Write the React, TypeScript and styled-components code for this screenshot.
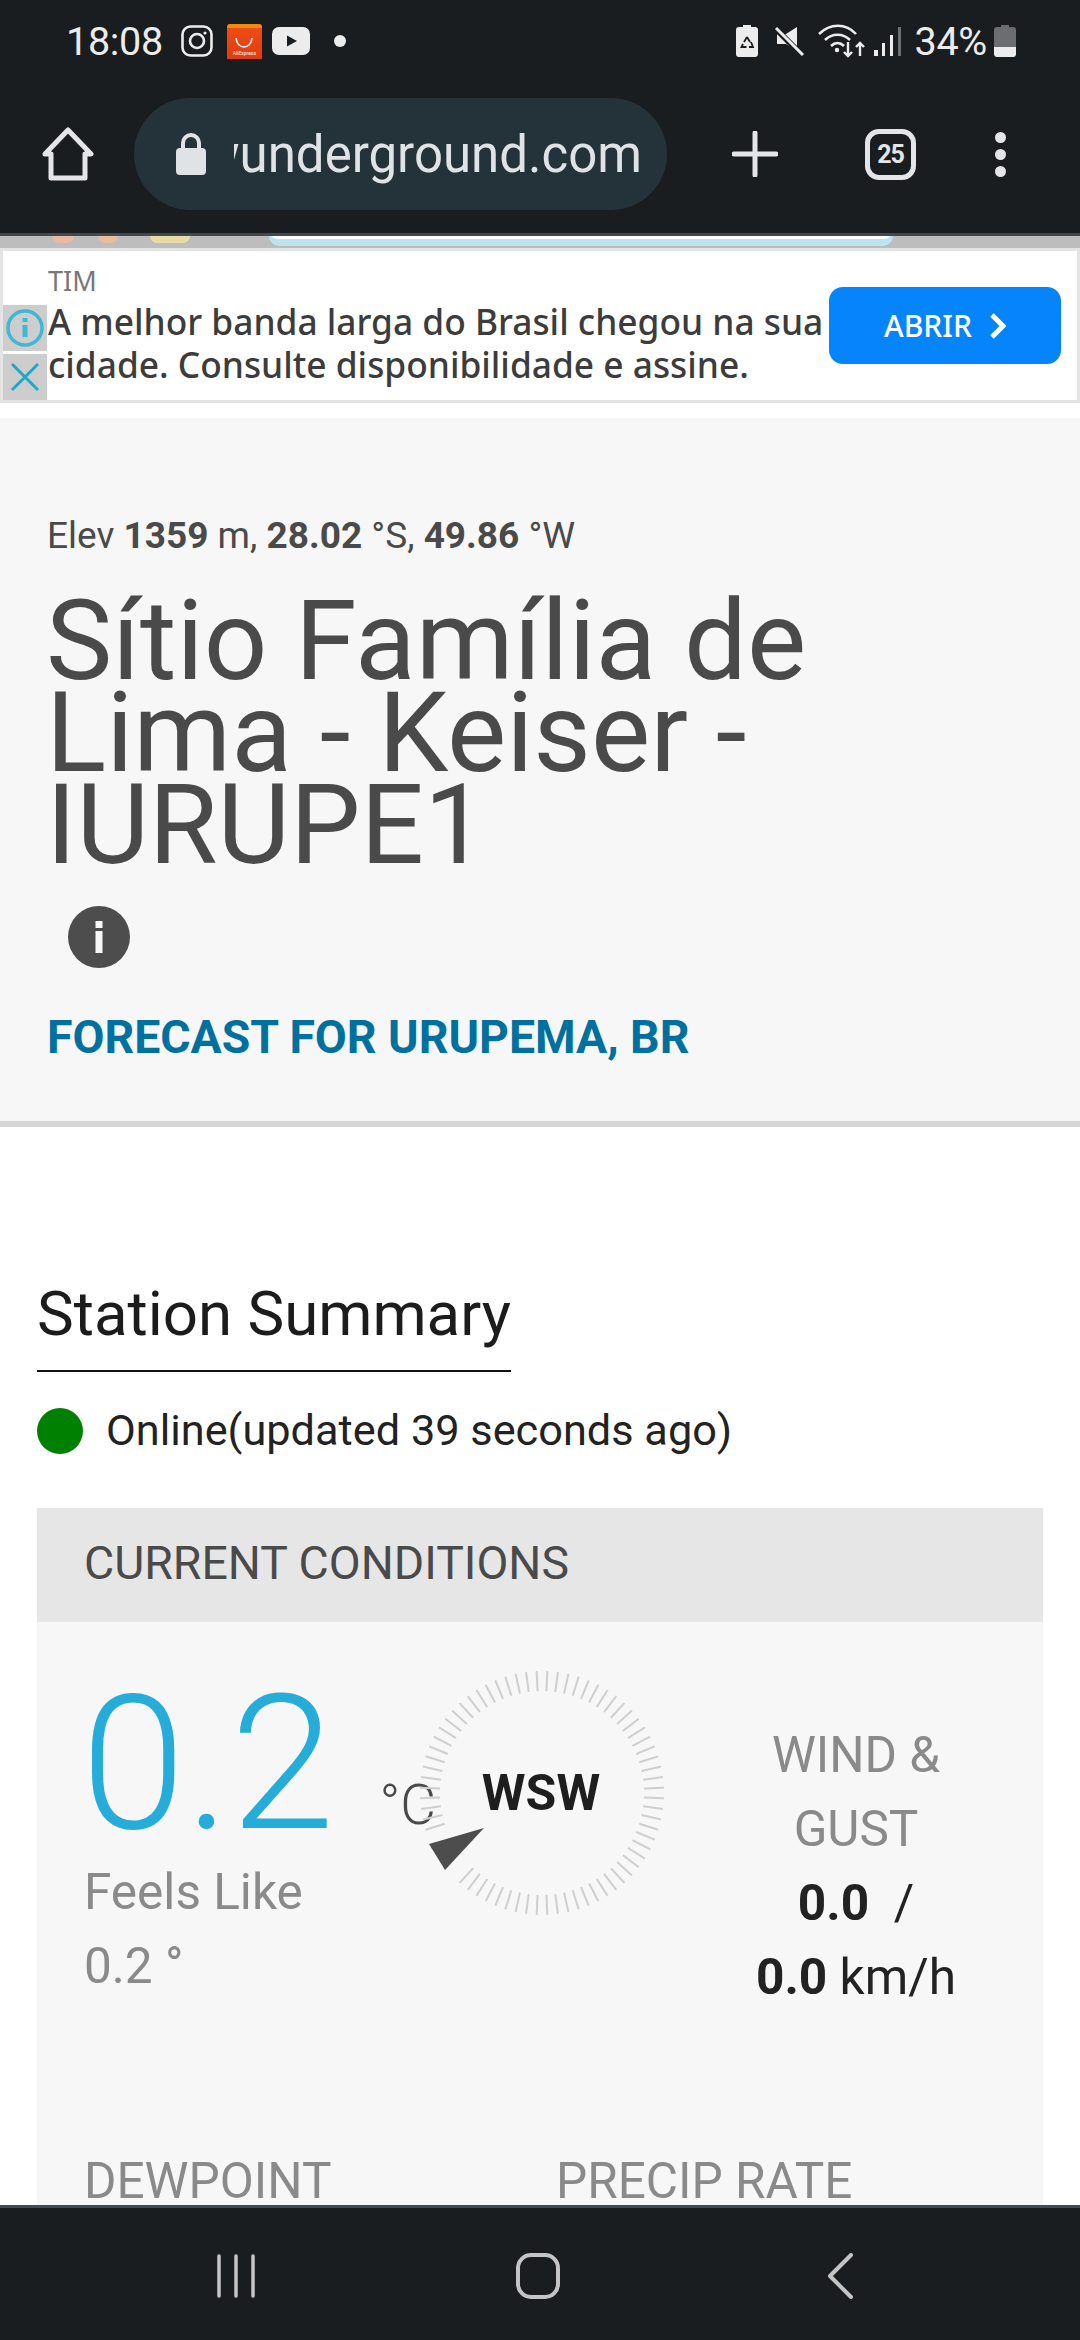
import React from 'react';
import styled, { createGlobalStyle } from 'styled-components';

const GlobalStyle = createGlobalStyle`
  html, body {
    margin: 0;
    padding: 0;
    background: #fff;
  }
  * {
    box-sizing: border-box;
  }
`;

const Screen = styled.div`
  width: 1080px;
  height: 2340px;
  display: flex;
  flex-direction: column;
  overflow: hidden;
  font-family: Roboto, 'Liberation Sans', sans-serif;
  background: #fff;
`;

const TopChrome = styled.header`
  height: 236px;
  flex: none;
  background: #1a1d20;
  border-bottom: 3px solid #43484c;
  display: flex;
  flex-direction: column;
`;

const StatusBar = styled.div`
  height: 82px;
  padding: 0 64px 0 66px;
  display: flex;
  align-items: center;
  color: #ececec;
  font-size: 39.5px;
`;

const StatusGroup = styled.div`
  display: flex;
  align-items: center;
`;

const StatusRight = styled(StatusGroup)`
  margin-left: auto;
`;

const Time = styled.span`
  margin-right: 18px;
  letter-spacing: -0.3px;
`;

const Percent = styled.span`
  margin: 0 7px 0 13px;
  letter-spacing: -0.3px;
`;

const AliBadge = styled.div`
  width: 35px;
  height: 35px;
  margin: 0 10px 0 14px;
  background: linear-gradient(#f08a12 0 12%, #ee4d16 12%, #e23a0d);
  border-radius: 3px 3px 0 0;
  display: flex;
  flex-direction: column;
  align-items: center;
  justify-content: flex-end;
  color: #fff;
`;

const AliText = styled.span`
  font-size: 5px;
  line-height: 8px;
  margin-bottom: 2px;
  white-space: nowrap;
`;

const NotifyDot = styled.span`
  width: 12px;
  height: 12px;
  border-radius: 50%;
  background: #ececec;
  margin-left: 24px;
`;

const Toolbar = styled.div`
  flex: 1;
  display: flex;
  align-items: center;
  padding: 0 70px 7px 42px;
`;

const UrlPill = styled.div`
  width: 533px;
  height: 112px;
  margin: 0 65px 0 40px;
  padding: 0 25px 0 42px;
  border-radius: 56px;
  background: #24323a;
  display: flex;
  align-items: center;
  color: #dfe3e6;
`;

const UrlClip = styled.div`
  flex: 1;
  margin-left: 28px;
  overflow: hidden;
  display: flex;
  justify-content: flex-end;
  font-size: 51px;
  white-space: nowrap;
`;

const TabCount = styled.div`
  width: 51px;
  height: 51px;
  margin: 0 79px 0 87px;
  border: 5px solid #e3e5e7;
  border-radius: 14px;
  display: flex;
  align-items: center;
  justify-content: center;
  color: #e3e5e7;
  font-size: 25px;
  font-weight: 700;
  letter-spacing: -1px;
`;

const Dots = styled.div`
  display: flex;
  flex-direction: column;
  gap: 6px;
`;

const Dot = styled.span`
  width: 11px;
  height: 11px;
  border-radius: 50%;
  background: #e3e5e7;
`;

const AdPeek = styled.div`
  height: 12px;
  flex: none;
  background: #bdbdbd;
  display: flex;
  padding-left: 52px;
`;

const PeekBlob = styled.span<{ $w: number; $gap: number; $c: string }>`
  width: ${p => p.$w}px;
  height: 7px;
  margin-right: ${p => p.$gap}px;
  border-radius: 0 0 12px 12px;
  background: ${p => p.$c};
`;

const PeekBar = styled.span`
  width: 624px;
  height: 10px;
  margin-left: 79px;
  background: #fff;
  border-bottom: 7px solid #bce3ef;
  border-left: 3px solid #bce3ef;
  border-right: 3px solid #bce3ef;
  border-radius: 0 0 10px 10px;
`;

const AdBanner = styled.aside`
  position: relative;
  height: 155px;
  flex: none;
  background: #fff;
  border: 3px solid #e4e4e4;
  padding: 12px 16px 0 45px;
  display: grid;
  grid-template-columns: 1fr 232px;
  color: #3c3c3c;
`;

const AdCopy = styled.div`
  display: flex;
  flex-direction: column;
`;

const AdBrand = styled.span`
  font-size: 27px;
  line-height: 36px;
  color: #777;
  font-family: 'Noto Sans', sans-serif;
`;

const AdText = styled.span`
  font-family: 'Noto Sans', sans-serif;
  font-size: 35.3px;
  font-weight: 500;
  line-height: 43px;
  margin-top: 1px;
  white-space: nowrap;
`;

const AdButton = styled.div`
  height: 77px;
  margin-top: 24px;
  border-radius: 14px;
  background: #0584fb;
  color: #fff;
  font-family: 'Noto Sans', sans-serif;
  font-size: 30px;
  font-weight: 500;
  display: flex;
  align-items: center;
  justify-content: center;
  gap: 18px;
`;

const AdChoice = styled.div<{ $bottom: number }>`
  position: absolute;
  left: 0;
  bottom: ${p => p.$bottom}px;
  width: 44px;
  height: 46px;
  background: #cdcdcd;
  display: flex;
  align-items: center;
  justify-content: center;
`;

const Scroller = styled.main`
  flex: 1;
  overflow: hidden;
  padding-top: 15px;
`;

const StationHeader = styled.section`
  height: 709px;
  background: #f7f7f7;
  border-bottom: 6px solid #d6d6d6;
  padding: 96px 47px 0;
  color: #4a4a4a;
`;

const Elevation = styled.div`
  font-size: 37px;
  line-height: 44px;
  b {
    font-weight: 700;
  }
`;

const StationTitle = styled.h1`
  margin: 37px 0 0 -1px;
  font-size: 111.7px;
  line-height: 92px;
  font-weight: 400;
`;

const InfoBadge = styled.div`
  width: 62px;
  height: 62px;
  margin: 35px 0 0 21px;
  border-radius: 50%;
  background: #4d4d4d;
  display: flex;
  align-items: center;
  justify-content: center;
`;

const ForecastLink = styled.a`
  display: block;
  margin-top: 43px;
  font-size: 46.4px;
  line-height: 52px;
  font-weight: 700;
  color: #00709f;
`;

const Summary = styled.section`
  padding: 152px 37px 0;
`;

const SummaryTitle = styled.h2`
  display: inline-block;
  margin: 0;
  padding-bottom: 21px;
  border-bottom: 2px solid #111;
  font-size: 61.8px;
  line-height: 70px;
  font-weight: 400;
  color: #1c1c1c;
`;

const OnlineRow = styled.div`
  margin-top: 34px;
  display: flex;
  align-items: center;
  gap: 23px;
  font-size: 43.3px;
  line-height: 50px;
  color: #222;
`;

const OnlineDot = styled.span`
  width: 46px;
  height: 46px;
  border-radius: 50%;
  background: #008000;
`;

const Panel = styled.div`
  margin-top: 52px;
  background: #f7f7f7;
`;

const PanelHead = styled.div`
  height: 114px;
  padding: 0 0 4px 47px;
  background: #e6e6e6;
  display: flex;
  align-items: center;
  font-size: 46.4px;
  color: #4a4a4a;
`;

const Conditions = styled.div`
  display: grid;
  grid-template-columns: 306px 330px 1fr;
  padding: 20px 0 0 47px;
`;

const TempBlock = styled.div`
  padding-top: 32px;
`;

const TempRow = styled.div`
  display: flex;
  align-items: flex-start;
  white-space: nowrap;
  color: #26acd8;
`;

const TempValue = styled.span`
  margin-left: -3px;
  font-size: 188px;
  line-height: 181px;
  font-weight: 300;
`;

const TempUnit = styled.span`
  margin: 101px 0 0 45px;
  font-size: 55px;
  line-height: 60px;
  font-weight: 300;
  color: #4a4a4a;
`;

const GrayLine = styled.div`
  font-size: 49.5px;
  line-height: 74px;
  color: #8a8a8a;
`;

const Compass = styled.div`
  width: 250px;
  height: 250px;
  margin: 26px 0 0 27px;
  position: relative;
  z-index: 1;
  display: flex;
  align-items: center;
  justify-content: center;
`;

const CompassLabel = styled.span`
  position: absolute;
  top: 97px;
  left: -1px;
  width: 100%;
  text-align: center;
  font-size: 50px;
  line-height: 56px;
  font-weight: 700;
  color: #1e1e1e;
`;

const WindBlock = styled.div`
  padding: 76px 51px 0 0;
  text-align: center;
`;

const WindValue = styled.div`
  font-size: 49.6px;
  line-height: 74px;
  color: #222;
  b {
    font-weight: 700;
  }
`;

const StatGrid = styled.div`
  display: grid;
  grid-template-columns: 472px 1fr;
  padding: 130px 0 0 47px;
`;

const BottomNav = styled.nav`
  height: 135px;
  flex: none;
  background: #1a1d20;
  border-top: 3px solid #444b50;
  display: grid;
  grid-template-columns: repeat(3, 302px);
  justify-items: center;
  align-items: center;
  padding: 4px 0 0 85px;
`;

const ticks = Array.from({ length: 72 }, (_, i) => i * 5 + 2.5).filter(a => a < 225 || a > 248);

const WindCompass = () => (
  <Compass>
    <svg width="250" height="250" viewBox="-125 -125 250 250">
      {ticks.map(a => (
        <line key={a} x1="0" y1="-122" x2="0" y2="-102" stroke="#cfcfcf" strokeWidth="2" transform={`rotate(${a})`} />
      ))}
      <polygon points="-113,51 -58,35 -97,77" fill="#4d4d4d" />
    </svg>
    <CompassLabel>WSW</CompassLabel>
  </Compass>
);

const App: React.FC = () => {
  return (
    <Screen>
      <GlobalStyle />
      <TopChrome>
        <StatusBar>
          <StatusGroup>
            <Time>18:08</Time>
            <svg width="32" height="32" viewBox="0 0 32 32" fill="none" stroke="#ececec" strokeWidth="2.6">
              <rect x="1.5" y="1.5" width="29" height="29" rx="8" />
              <circle cx="16" cy="16" r="7" />
              <circle cx="24" cy="8" r="1.6" fill="#ececec" stroke="none" />
            </svg>
            <AliBadge>
              <svg width="20" height="12" viewBox="0 0 20 12" fill="none" stroke="#fff" strokeWidth="1.6">
                <path d="M2 1c1 12 15 12 16 0" />
              </svg>
              <AliText>AliExpress</AliText>
            </AliBadge>
            <svg width="38" height="28" viewBox="0 0 38 28">
              <rect width="38" height="28" rx="7" fill="#ececec" />
              <path d="M15 8.5l10 5.5-10 5.5z" fill="#1a1d20" />
            </svg>
            <NotifyDot />
          </StatusGroup>
          <StatusRight>
            <svg width="22" height="32" viewBox="0 0 22 32">
              <path d="M7 0h8v2h4a3 3 0 0 1 3 3v24a3 3 0 0 1-3 3H3a3 3 0 0 1-3-3V5a3 3 0 0 1 3-3h4z" fill="#ececec" />
              <path d="M11 12l-3 5M11 12l3 5M7 19l-1.500 3h5M15 17l2 5h-4" stroke="#1a1d20" strokeWidth="1.800" fill="none" />
            </svg>
            <svg width="32" height="30" viewBox="0 0 32 30" style={{ marginLeft: 15 }}>
              <path d="M24 1v24L13 18H4V8h9z" fill="#ececec" />
              <path d="M3 3l26 26" stroke="#1a1d20" strokeWidth="6" />
              <path d="M3 2l27 27" stroke="#ececec" strokeWidth="3" />
            </svg>
            <svg width="48" height="34" viewBox="0 0 48 34" fill="none" stroke="#ececec" strokeWidth="2.6" style={{ marginLeft: 13 }}>
              <path d="M1 10c11-11 27-11 37 0" />
              <path d="M7 16c7-7 18-7 25 0" />
              <path d="M13 22c4-4 9-4 13 0" />
              <circle cx="19" cy="26" r="2.200" fill="#ececec" stroke="none" />
              <path d="M30 18v14M26 28l4 4 4-4M42 32V19M38 23l4-4 4 4" strokeWidth="2.400" />
            </svg>
            <svg width="28" height="30" viewBox="0 0 28 30" style={{ marginLeft: 8 }}>
              <rect x="0" y="24" width="4" height="6" fill="#ececec" />
              <rect x="8" y="17" width="3" height="13" fill="#ececec" />
              <rect x="16" y="9" width="3" height="21" fill="#ececec" />
              <rect x="24" y="1" width="3" height="29" fill="#6c6f72" />
            </svg>
            <Percent>34%</Percent>
            <svg width="22" height="32" viewBox="0 0 22 32">
              <path d="M7 0h8v2h4a3 3 0 0 1 3 3v17H0V5a3 3 0 0 1 3-3h4z" fill="#6b6d70" />
              <path d="M0 22h22v7a3 3 0 0 1-3 3H3a3 3 0 0 1-3-3z" fill="#ececec" />
            </svg>
          </StatusRight>
        </StatusBar>
        <Toolbar>
          <svg width="52" height="54" viewBox="0 0 52 54" fill="none" stroke="#e3e5e7" strokeWidth="5" strokeLinejoin="round" strokeLinecap="round">
            <path d="M3 27L26 3l23 24h-6v24H9V27z" />
          </svg>
          <UrlPill>
            <svg width="30" height="42" viewBox="0 0 30 42">
              <path d="M7 16v-6a8 8 0 0 1 16 0v6" fill="none" stroke="#dfe3e6" strokeWidth="4" />
              <rect y="15" width="30" height="27" rx="4" fill="#dfe3e6" />
            </svg>
            <UrlClip>wunderground.com</UrlClip>
          </UrlPill>
          <svg width="46" height="46" viewBox="0 0 46 46" stroke="#e3e5e7" strokeWidth="5" strokeLinecap="round">
            <path d="M23 2v42M2 23h42" />
          </svg>
          <TabCount>25</TabCount>
          <Dots>
            <Dot />
            <Dot />
            <Dot />
          </Dots>
        </Toolbar>
      </TopChrome>
      <AdPeek>
        <PeekBlob $w={22} $gap={24} $c="#e8b9a4" />
        <PeekBlob $w={20} $gap={32} $c="#e8bda0" />
        <PeekBlob $w={40} $gap={0} $c="#e6dca6" />
        <PeekBar />
      </AdPeek>
      <AdBanner>
        <AdCopy>
          <AdBrand>TIM</AdBrand>
          <AdText>
            A melhor banda larga do Brasil chegou na sua
            <br />
            cidade. Consulte disponibilidade e assine.
          </AdText>
        </AdCopy>
        <AdButton>
          ABRIR
          <svg width="16" height="26" viewBox="0 0 16 26" fill="none" stroke="#fff" strokeWidth="5">
            <path d="M2 2l11 11L2 24" />
          </svg>
        </AdButton>
        <AdChoice $bottom={49}>
          <svg width="40" height="40" viewBox="0 0 40 40" fill="none" stroke="#3fb8d4" strokeWidth="3.500">
            <circle cx="20" cy="20" r="17" />
            <path d="M20 17v12M20 10v4" strokeWidth="5" />
          </svg>
        </AdChoice>
        <AdChoice $bottom={0}>
          <svg width="30" height="30" viewBox="0 0 30 30" stroke="#1ea9c9" strokeWidth="3">
            <path d="M2 2l26 26M28 2L2 28" />
          </svg>
        </AdChoice>
      </AdBanner>
      <Scroller>
        <StationHeader>
          <Elevation>
            Elev <b>1359</b> m, <b>28.02</b> °S, <b>49.86</b> °W
          </Elevation>
          <StationTitle>
            Sítio Família de
            <br />
            Lima - Keiser -
            <br />
            IURUPE1
          </StationTitle>
          <InfoBadge>
            <svg width="10" height="32" viewBox="0 0 10 32" fill="#f7f7f7">
              <rect x="1.500" y="0" width="7" height="7" />
              <rect x="1.500" y="10" width="7" height="22" />
            </svg>
          </InfoBadge>
          <ForecastLink>FORECAST FOR URUPEMA, BR</ForecastLink>
        </StationHeader>
        <Summary>
          <SummaryTitle>Station Summary</SummaryTitle>
          <OnlineRow>
            <OnlineDot />
            Online(updated 39 seconds ago)
          </OnlineRow>
          <Panel>
            <PanelHead>CURRENT CONDITIONS</PanelHead>
            <Conditions>
              <TempBlock>
                <TempRow>
                  <TempValue>0.2</TempValue>
                  <TempUnit>°C</TempUnit>
                </TempRow>
                <GrayLine>Feels Like</GrayLine>
                <GrayLine>0.2 °</GrayLine>
              </TempBlock>
              <WindCompass />
              <WindBlock>
                <GrayLine>WIND &amp;</GrayLine>
                <GrayLine>GUST</GrayLine>
                <WindValue>
                  <b>0.0</b>&nbsp; /
                </WindValue>
                <WindValue>
                  <b>0.0</b> km/h
                </WindValue>
              </WindBlock>
            </Conditions>
            <StatGrid>
              <GrayLine>DEWPOINT</GrayLine>
              <GrayLine>PRECIP RATE</GrayLine>
            </StatGrid>
          </Panel>
        </Summary>
      </Scroller>
      <BottomNav>
        <svg width="38" height="44" viewBox="0 0 38 44" stroke="#c4c4c4" strokeWidth="3.500" strokeLinecap="round">
          <path d="M2 2v40M19 2v40M36 2v40" />
        </svg>
        <svg width="44" height="46" viewBox="0 0 44 46" fill="none" stroke="#c4c4c4" strokeWidth="4">
          <rect x="2" y="2" width="40" height="42" rx="13" />
        </svg>
        <svg width="26" height="46" viewBox="0 0 26 46" fill="none" stroke="#c4c4c4" strokeWidth="4" strokeLinecap="round" strokeLinejoin="round">
          <path d="M24 2L3 23l21 21" />
        </svg>
      </BottomNav>
    </Screen>
  );
};

export default App;
